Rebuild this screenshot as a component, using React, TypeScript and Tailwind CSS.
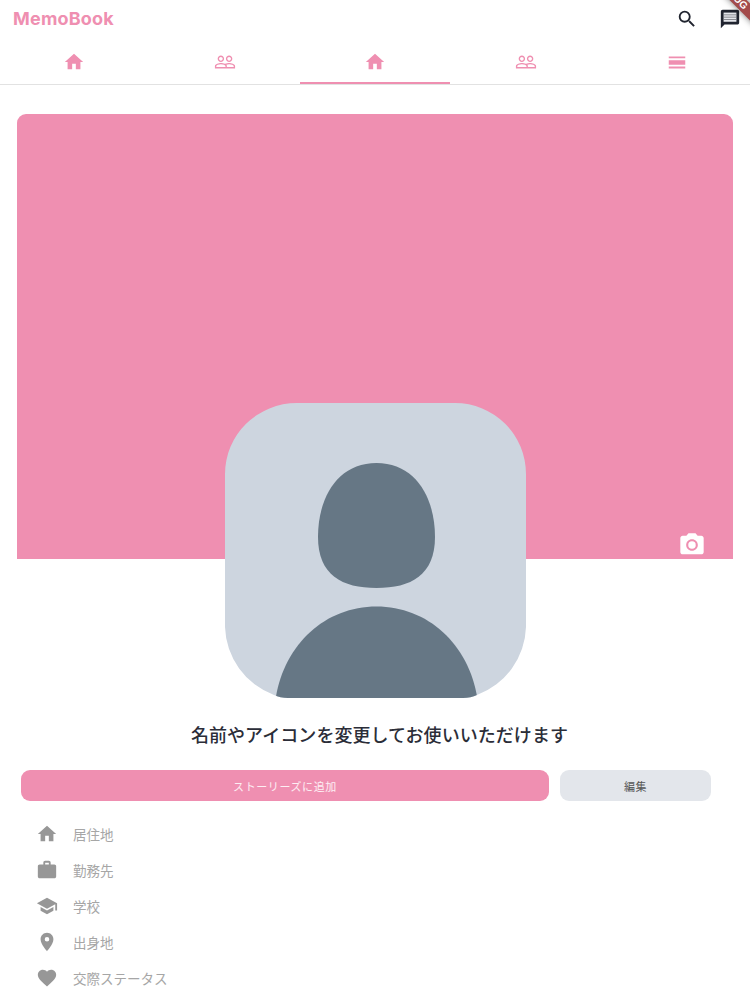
import React from 'react';
import {
    MdHome,
    MdPeopleOutline,
    MdSearch,
    MdPhotoCamera,
    MdWork,
    MdSchool,
    MdPlace,
    MdFavorite,
} from 'react-icons/md';

const DayViewIcon = () => (
    <svg viewBox="0 0 24 24" width="22" height="22" fill="currentColor">
        <path d="M3 17h18v2H3zM3 10h18v5H3zM3 6h18v2H3z" />
    </svg>
);

const MessageIcon = () => (
    <svg viewBox="0 0 24 24" width="22" height="22" className="text-[#20242f]">
        <path fill="currentColor" d="M20 2H4c-1.1 0-2 .9-2 2v18l4-4h14c1.1 0 2-.9 2-2V4c0-1.1-.9-2-2-2z" />
        <path fill="#e4e6eb" d="M5 5h14v10H5z" />
        <path fill="#6b6e75" d="M5 7.100h14v.8H5zM5 9.600h14v.8H5zM5 12.100h14v.8H5z" />
    </svg>
);

const details = [
    { icon: MdHome, label: '居住地' },
    { icon: MdWork, label: '勤務先' },
    { icon: MdSchool, label: '学校' },
    { icon: MdPlace, label: '出身地' },
    { icon: MdFavorite, label: '交際ステータス' },
];

const Header = () => (
    <header className="flex h-[37px] items-center justify-between pl-[13px] pr-[9px]">
        <h1 className="text-[18px] leading-[36px] font-bold tracking-[0.2px] text-[#ef8fb1] font-['Inter','Liberation_Sans',sans-serif]">MemoBook</h1>
        <div className="flex items-center gap-[21px]">
            <MdSearch size={22} className="text-[#20242f]" />
            <MessageIcon />
        </div>
    </header>
);

const Tabs = () => (
    <nav className="grid h-12 grid-cols-5 border-b border-[#e2e2e2] text-[#ef8fb1]">
        <div className="flex items-start justify-center pt-[14px] pr-[3px]"><MdHome size={22} /></div>
        <div className="flex items-start justify-center pt-[14px]"><MdPeopleOutline size={22} /></div>
        <div className="flex items-start justify-center border-b-2 border-[#ef8fb1] pt-[14px]"><MdHome size={22} /></div>
        <div className="flex items-start justify-center pt-[14px] pl-[2px]"><MdPeopleOutline size={22} /></div>
        <div className="flex items-start justify-center pt-[14px] pl-[3px]"><DayViewIcon /></div>
    </nav>
);

const Avatar = () => (
    <svg viewBox="0 0 301 295" width="301" height="295">
        <defs>
            <clipPath id="avatar">
                <path d="M72 0H230A71 71 0 0 1 301 71V224A75 75 0 0 1 252 292Q246 295 238 295H63Q55 295 49 292A75 75 0 0 1 0 224V71A72 71 0 0 1 72 0Z" />
            </clipPath>
        </defs>
        <g clipPath="url(#avatar)">
            <rect width="301" height="295" fill="#cdd5df" />
            <path fill="#667785" d="M151.500 60C190 60 210 94 210 134C210 172 186 185 151.500 185C117 185 93 172 93 134C93 94 113 60 151.500 60Z" />
            <path fill="#667785" d="M50 300C57 243 99 203.500 151.500 203.500C204 203.500 246 243 253 300Z" />
        </g>
    </svg>
);

export default function App() {
    return (
        <div className="relative h-[1000px] w-[750px] overflow-hidden bg-white font-['Liberation_Sans','Noto_Sans_CJK_JP',sans-serif]">
            <Header />
            <Tabs />

            <section className="relative mx-[17px] mt-[29px] h-[445px] w-[716px] rounded-t-[9px] bg-[#ef8fb1]">
                <MdPhotoCamera size={28} className="absolute right-[27px] bottom-0 text-white" />
                <div className="absolute left-[208px] top-[289px]">
                    <Avatar />
                </div>
            </section>

            <h2 className="mt-[159px] pl-[9px] text-center text-[18px] leading-[32px] font-medium tracking-[0.05px] text-[#2b2d38] font-['Noto_Sans_CJK_JP',sans-serif]">名前やアイコンを変更してお使いいただけます</h2>

            <div className="mt-5 ml-[21px] flex gap-[11px] text-[11px] tracking-[0.6px] font-['Noto_Sans_CJK_JP',sans-serif]">
                <button className="h-[31px] w-[528px] rounded-[9px] bg-[#ef8fb1] pt-px text-white/85">ストーリーズに追加</button>
                <button className="h-[31px] w-[151px] rounded-[9px] bg-[#e3e6eb] pt-px text-[#555]">編集</button>
            </div>

            <ul className="mt-[15px] ml-9 text-[13.5px] text-[#a6a6a6] font-['Noto_Sans_CJK_JP',sans-serif]">
                {details.map(({ icon: Icon, label }) => (
                    <li key={label} className="flex h-9 items-center gap-[15px]">
                        <Icon size={22} className="text-[#979797]" />
                        <span>{label}</span>
                    </li>
                ))}
            </ul>

            {/* debug ribbon across the corner */}
            <div className="absolute left-[683px] top-[-11px] flex h-[12px] w-[100px] rotate-45 items-center justify-center bg-[#a34b4b] text-[10px] leading-none font-black text-white shadow-[0_0_6px_rgba(0,0,0,0.5)]">DEBUG</div>
        </div>
    );
}
